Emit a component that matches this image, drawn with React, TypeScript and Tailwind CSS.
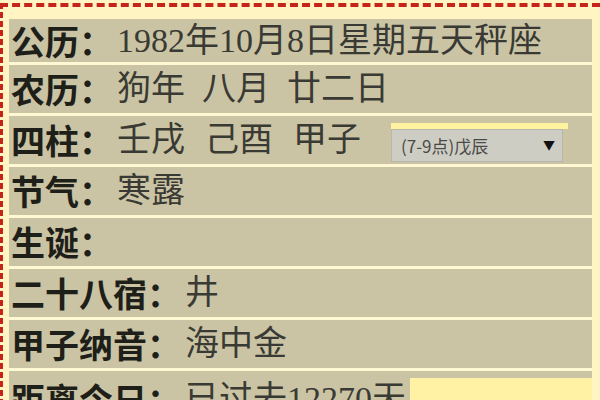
import React from "react";

const cjk = { fontFamily: '"Noto Sans CJK SC", sans-serif' };
const val = { fontFamily: '"Liberation Serif", "Noto Sans CJK SC", serif' };

function Row({ label, children, h = "h-[48px]" }: { label: string; children?: React.ReactNode; h?: string }) {
  return (
    <div className={`flex items-center ${h} bg-[#cac4a4] pl-[2px]`}>
      <span className="text-[34px] font-bold text-[#1f1f1a] leading-none whitespace-nowrap" style={cjk}>
        {label}
      </span>
      <span className="ml-[4px] flex items-center text-[34px] text-[#3a3a34] leading-none whitespace-nowrap" style={val}>
        {children}
      </span>
    </div>
  );
}

export default function App() {
  return (
    <div className="w-[600px] h-[400px] overflow-hidden bg-[#fff4c2] pt-[3px]">
      <div className="h-[420px] border-t-[4px] border-l-[3px] border-dashed border-[#c4241a] pt-[12px] pl-[6px] pr-[8px]">
        <div className="flex flex-col gap-[3px] bg-[#fff8d2]">
          <Row label="公历：" h="h-[43px]">1982年10月8日星期五天秤座</Row>
          <Row label="农历：">
            <span>狗年</span>
            <span className="ml-[17px]">八月</span>
            <span className="ml-[17px]">廿二日</span>
          </Row>
          <Row label="四柱：">
            <span>壬戌</span>
            <span className="ml-[20px]">己酉</span>
            <span className="ml-[20px]">甲子</span>
            <span className="ml-[30px] flex flex-col w-[177px] mt-[4px]">
              <span className="h-[6px] bg-[#fff3a0]" />
              <span className="flex items-center h-[33px] w-[172px] bg-[#cecdc4] border border-[#b8b7ae]">
                <span className="flex-1 pl-[9px] text-[17px] text-[#4a4a48]" style={cjk}>(7-9点)戊辰</span>
                <span className="w-[26px] text-center text-[12px] text-[#111]" style={cjk}>▼</span>
              </span>
            </span>
          </Row>
          <Row label="节气：">寒露</Row>
          <Row label="生诞：" />
          <Row label="二十八宿：">井</Row>
          <Row label="甲子纳音：">海中金</Row>
          <div className="flex flex-col bg-[#cac4a4] h-[48px]">
            <div className="h-[7px]" />
            <div className="flex flex-1">
              <span className="flex items-center pl-[2px] pr-[4px] text-[34px] leading-none whitespace-nowrap">
                <span className="font-bold text-[#1f1f1a]" style={cjk}>距离今日：</span>
                <span className="ml-[4px] text-[#3a3a34]" style={val}>已过去12270天</span>
              </span>
              <span className="flex-1 bg-[#fff2a4]" />
            </div>
          </div>
        </div>
      </div>
    </div>
  );
}
